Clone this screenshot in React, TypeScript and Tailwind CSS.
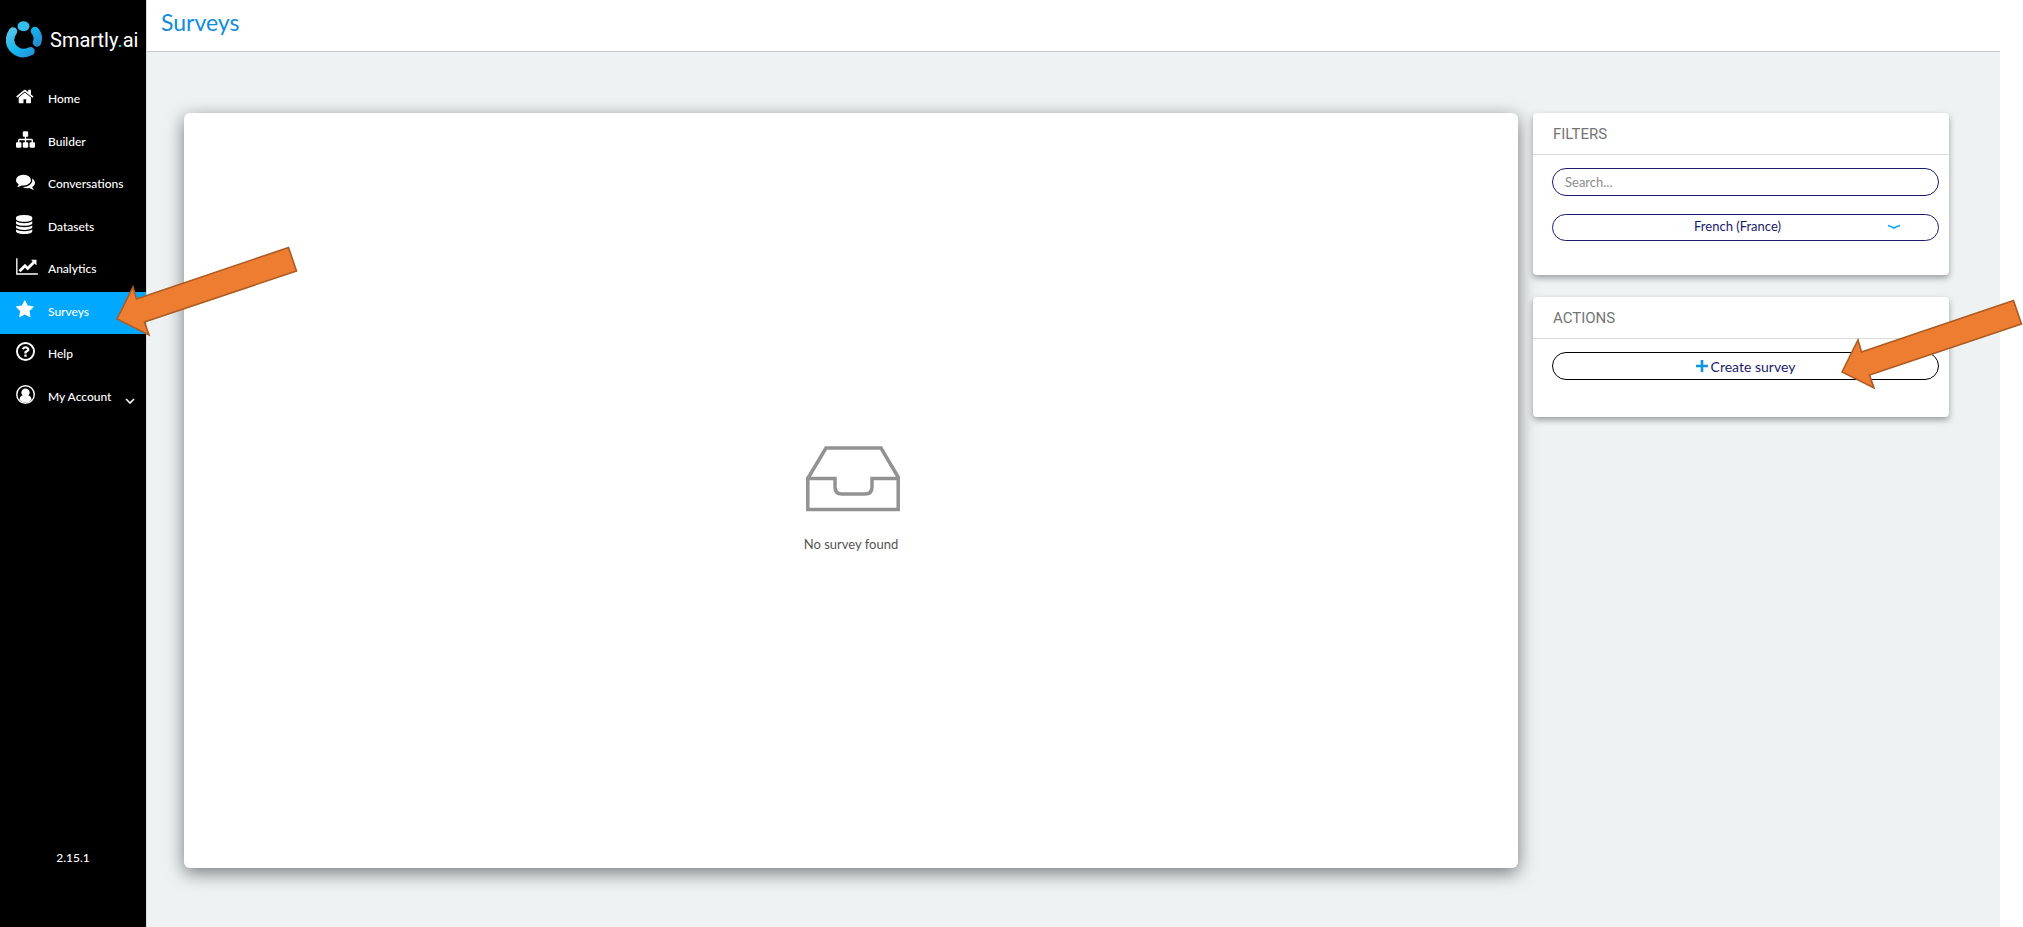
import { useState } from "react";
import type { ReactNode } from "react";

interface NavItem {
  label: string;
  icon: ReactNode;
}

function Glyph({ d, wide = false }: { d: string; wide?: boolean }) {
  return (
    <svg
      viewBox={wide ? "0 0 2048 1792" : "0 0 1792 1792"}
      className={wide ? "h-[19px] w-[22px]" : "h-[19px] w-[19px]"}
      fill="currentColor"
      aria-hidden="true"
    >
      <path d={d} />
    </svg>
  );
}

const HOME =
  "M1408 992v480q0 26-19 45t-45 19h-384v-384h-256v384h-384q-26 0-45-19t-19-45v-480q0-1 .5-3t.5-3l575-474 575 474q1 2 1 6zm223-69l-62 74q-8 9-21 11h-3q-13 0-21-7l-692-577-692 577q-12 8-24 7-13-2-21-11l-62-74q-8-10-7-23.5t11-21.5l719-599q32-26 76-26t76 26l244 204v-195q0-14 9-23t23-9h192q14 0 23 9t9 23v408l219 182q10 8 11 21.5t-7 23.5z";
const SITEMAP =
  "M1792 1248v320q0 40-28 68t-68 28h-320q-40 0-68-28t-28-68v-320q0-40 28-68t68-28h96v-192h-512v192h96q40 0 68 28t28 68v320q0 40-28 68t-68 28h-320q-40 0-68-28t-28-68v-320q0-40 28-68t68-28h96v-192h-512v192h96q40 0 68 28t28 68v320q0 40-28 68t-68 28h-320q-40 0-68-28t-28-68v-320q0-40 28-68t68-28h96v-192q0-52 38-90t90-38h512v-192h-96q-40 0-68-28t-28-68v-320q0-40 28-68t68-28h320q40 0 68 28t28 68v320q0 40-28 68t-68 28h-96v192h512q52 0 90 38t38 90v192h96q40 0 68 28t28 68z";
const COMMENTS =
  "M1408 768q0 139-94 257t-256.5 186.5-353.5 68.5q-86 0-176-16-124 88-278 128-36 9-86 16h-3q-11 0-20.5-8t-11.5-21q-1-3-1-6.5t.5-6.5 2-6l2.5-5 3.5-5.5 4-5 4.5-5 4-4.5q5-6 23-25t26-29.5 22.5-29 25-38.5 20.5-44q-124-72-195-177t-71-224q0-139 94-257t256.5-186.5 353.5-68.5 353.5 68.5 256.5 186.5 94 257zm384 256q0 120-71 224.5t-195 176.5q10 24 20.5 44t25 38.5 22.5 29 26 29.5 23 25q1 1 4 4.5t4.5 5 4 5 3.5 5.5l2.5 5 2 6 .5 6.5-1 6.5q-3 14-13 22t-22 7q-50-7-86-16-154-40-278-128-90 16-176 16-271 0-472-132 58 4 88 4 161 0 309-45t264-129q125-92 192-212t67-254q0-77-23-152 129 71 204 178t75 230z";
const DATABASE =
  "M768 768q237 0 443-43t325-127v170q0 69-103 128t-280 93.5-385 34.5-385-34.5-280-93.5-103-128v-170q119 84 325 127t443 43zm0 768q237 0 443-43t325-127v170q0 69-103 128t-280 93.5-385 34.5-385-34.5-280-93.5-103-128v-170q119 84 325 127t443 43zm0-384q237 0 443-43t325-127v170q0 69-103 128t-280 93.5-385 34.5-385-34.5-280-93.5-103-128v-170q119 84 325 127t443 43zm0-1152q208 0 385 34.5t280 93.5 103 128v128q0 69-103 128t-280 93.5-385 34.5-385-34.5-280-93.5-103-128v-128q0-69 103-128t280-93.5 385-34.5z";
const LINE_CHART =
  "M2048 1536v128h-2048v-1536h128v1408h1920zm-128-1248v435q0 21-19.5 29.5t-35.5-7.5l-121-121-633 633q-10 10-23 10t-23-10l-233-233-416 416-192-192 585-585q10-10 23-10t23 10l233 233 464-464-121-121q-16-16-7.5-35.5t29.5-19.5h435q14 0 23 9t9 23z";
const STAR =
  "M1664 647q0 22-26 48l-363 354 86 500q1 7 1 20 0 21-10.5 35.5t-30.5 14.5q-19 0-40-12l-449-236-449 236q-22 12-40 12-21 0-31.5-14.5t-10.5-35.5q0-6 2-20l86-500-364-354q-25-27-25-48 0-37 56-46l502-73 225-455q19-41 49-41t49 41l225 455 502 73q56 9 56 46z";
const QUESTION =
  "M1008 1200v160q0 14-9 23t-23 9h-160q-14 0-23-9t-9-23v-160q0-14 9-23t23-9h160q14 0 23 9t9 23zm256-496q0 50-15 90t-45.5 69-52 44-59.5 36q-32 18-46.5 28t-26 24-11.5 29v32q0 14-9 23t-23 9h-160q-14 0-23-9t-9-23v-68q0-35 10.5-64.5t24-47.5 39-35.5 41-25.5 44.5-21q53-25 75-43t22-49q0-42-43.5-71.5t-95.5-29.5q-56 0-95 27-29 20-80 83-9 12-25 12-11 0-19-6l-108-82q-10-7-12-20t5-23q122-192 349-192 129 0 238.5 89.5t109.5 214.5z";

function HelpIcon() {
  return (
    <svg viewBox="0 0 1792 1792" className="h-[19px] w-[19px]" fill="currentColor" aria-hidden="true">
      <circle cx="896" cy="896" r="805" fill="none" stroke="currentColor" strokeWidth="180" />
      <path d={QUESTION} />
    </svg>
  );
}

function AccountIcon() {
  return (
    <svg viewBox="0 0 20 20" className="h-[19px] w-[19px]" aria-hidden="true">
      <circle cx="10" cy="10" r="9.2" fill="none" stroke="currentColor" strokeWidth="1.5" />
      <circle cx="10" cy="8" r="4.4" fill="currentColor" />
      <path d="M3.6 15.4c.5-3 1.7-4.3 3.4-4.3h6c1.7 0 2.9 1.3 3.4 4.3A8.4 8.4 0 0 1 3.6 15.4z" fill="currentColor" />
    </svg>
  );
}

const navItems: NavItem[] = [
  { label: "Home", icon: <Glyph d={HOME} /> },
  { label: "Builder", icon: <Glyph d={SITEMAP} /> },
  { label: "Conversations", icon: <Glyph d={COMMENTS} /> },
  { label: "Datasets", icon: <Glyph d={DATABASE} /> },
  { label: "Analytics", icon: <Glyph d={LINE_CHART} wide /> },
  { label: "Surveys", icon: <Glyph d={STAR} /> },
  { label: "Help", icon: <HelpIcon /> },
  { label: "My Account", icon: <AccountIcon /> },
];

function Logo() {
  return (
    <a href="#home" className="flex items-center gap-2 pl-[6px]">
      <svg viewBox="0 0 36 37" className="h-[37px] w-[36px] shrink-0" aria-hidden="true">
        <defs>
          <linearGradient id="ring" gradientUnits="userSpaceOnUse" x1="3" y1="6" x2="28" y2="34">
            <stop offset="0" stopColor="#5cc8e8" />
            <stop offset="0.6" stopColor="#12b4ee" />
            <stop offset="1" stopColor="#2a8fd8" />
          </linearGradient>
          <linearGradient id="side" gradientUnits="userSpaceOnUse" x1="26" y1="6" x2="33" y2="26">
            <stop offset="0" stopColor="#10b4f0" />
            <stop offset="1" stopColor="#2a86cf" />
          </linearGradient>
        </defs>
        <path d="M7 10.500C2.800 16 3 24 8.500 28.500C13 32.500 19 33 24.500 30.300" fill="none" stroke="url(#ring)" strokeWidth="8.500" strokeLinecap="round" />
        <path d="M29 10C32 13.500 32.500 17.500 31 21.500" fill="none" stroke="url(#side)" strokeWidth="8.500" strokeLinecap="round" />
        <ellipse cx="17.500" cy="5.200" rx="6.400" ry="5.400" fill="#35bdec" stroke="#000" strokeWidth="0.800" />
      </svg>
      <span className="font-[Roboto,sans-serif] text-[20px] leading-6">
        Smartly<span className="text-[#3fd0e0]">.</span>ai
      </span>
    </a>
  );
}

// Orange callout arrow, tip at the lower left
function Arrow({ className }: { className: string }) {
  return (
    <svg viewBox="0 0 184 92" className={`pointer-events-none absolute z-20 h-[92px] w-[184px] ${className}`} aria-hidden="true">
      <path
        d="M3 74 L19 42 L22.500 54 L174.500 2.500 L182.500 26 L30.500 77 L35 90 Z"
        fill="#ed7d31"
        stroke="#ae5a21"
        strokeWidth="1.600"
      />
    </svg>
  );
}

function Sidebar({ active, setActive }: { active: string; setActive: (label: string) => void }) {
  return (
    <aside className="flex w-[146px] shrink-0 flex-col bg-black pt-[21px] pb-[59px] text-white">
      <Logo />
      <nav className="mt-[21px] grid h-[340px] auto-rows-fr">
        {navItems.map((item) => (
          <button
            key={item.label}
            type="button"
            onClick={() => setActive(item.label)}
            className={`relative flex items-center pl-4 text-left ${active === item.label ? "bg-[#00a8ff]" : ""}`}
          >
            <span className="flex w-8 shrink-0 pb-[7px]">{item.icon}</span>
            <span className="pb-[2px] text-[12px] leading-4 font-medium whitespace-nowrap">{item.label}</span>
            {item.label === "My Account" && (
              <svg viewBox="0 0 10 6" className="mt-[6px] ml-[14px] h-[6px] w-[10px]" aria-hidden="true">
                <path d="M1 1l4 4 4-4" fill="none" stroke="currentColor" strokeWidth="1.600" />
              </svg>
            )}
            {item.label === "Surveys" && <Arrow className="-top-[47px] left-[114px]" />}
          </button>
        ))}
      </nav>
      <p className="mt-auto text-center text-[12px] leading-5 font-medium">2.15.1</p>
    </aside>
  );
}

function Panel({ title, children }: { title: string; children: ReactNode }) {
  return (
    <section className="rounded bg-white shadow-[0_3px_6px_rgba(0,0,0,0.35)]">
      <h2 className="border-b border-[#dcdcdc] px-5 pt-[11px] pb-[10px] font-[Roboto,sans-serif] text-[15px] leading-5 text-[#757575]">
        {title}
      </h2>
      <div className="flex flex-col pt-[13px] pr-[10px] pb-[34px] pl-[19px]">{children}</div>
    </section>
  );
}

export default function App() {
  const [active, setActive] = useState("Surveys");
  const [search, setSearch] = useState("");
  const [language, setLanguage] = useState("French (France)");

  return (
    <div className="flex min-h-screen overflow-x-hidden bg-white pr-[23px] font-[Lato,sans-serif]">
      <Sidebar active={active} setActive={setActive} />
      <div className="flex min-w-0 flex-1 flex-col border-l border-[#d8dcdd] bg-[#eef2f3]">
        <header className="border-b border-[#c8c8c8] bg-white px-[14px] pt-[6px] pb-[13px]">
          <h1 className="text-[23px] leading-8 text-[#0f8ce0]">Surveys</h1>
        </header>
        <main className="flex flex-1 items-stretch gap-[15px] pt-[61px] pr-[51px] pb-[59px] pl-[37px]">
          <section className="flex min-w-0 flex-1 flex-col items-center justify-center gap-[22px] rounded-md bg-white pt-[18px] shadow-[0_5px_18px_rgba(0,0,0,0.5)]">
            <svg viewBox="0 0 94 66" className="ml-1 h-[66px] w-[94px]" fill="none" stroke="#929292" strokeWidth="3.500" aria-hidden="true">
              <path d="M1.800 32.500 L20 2 H75 L93 32.500 M1.800 32.500 V63.500 H92.200 V32.500 H66 V41 Q66 48 59 48 H36 Q29 48 29 41 V32.500 Z" />
            </svg>
            <p className="text-[13px] leading-5 text-[#555]">No survey found</p>
          </section>
          <div className="flex w-[416px] shrink-0 flex-col gap-[22px]">
            <Panel title="FILTERS">
              <input
                type="text"
                aria-label="Search"
                placeholder="Search..."
                value={search}
                onChange={(e) => setSearch(e.target.value)}
                className="h-7 rounded-full border border-[#1a1a75] px-3 text-[13px] text-[#1a1a6c] outline-none placeholder:text-[#8c8c8c]"
              />
              <div className="relative mt-[18px] flex">
                <select
                  aria-label="Language"
                  value={language}
                  onChange={(e) => setLanguage(e.target.value)}
                  className="h-[27px] w-full appearance-none rounded-full border border-[#1a1a75] bg-white pr-4 pb-[2px] text-center text-[13px] text-[#1a1a6c] outline-none [text-align-last:center]"
                >
                  <option>French (France)</option>
                </select>
                <svg viewBox="0 0 14 6" className="pointer-events-none absolute top-[10px] right-[38px] h-[6px] w-[14px]" aria-hidden="true">
                  <path d="M1 1.500Q4.500 2.500 7 4Q9.500 2.500 13 1.500" fill="none" stroke="#00a8ff" strokeWidth="1.800" />
                </svg>
              </div>
            </Panel>
            <Panel title="ACTIONS">
              <button
                type="button"
                className="relative mb-[3px] flex h-7 items-center justify-center gap-[3px] rounded-full border border-black text-[14px] text-[#1a1a6c]"
              >
                <svg viewBox="0 0 12 12" className="h-3 w-3" aria-hidden="true">
                  <path d="M6 0v12M0 6h12" stroke="#0d95e0" strokeWidth="2.600" />
                </svg>
                Create survey
                <Arrow className="-top-[55px] -right-[85px]" />
              </button>
            </Panel>
          </div>
        </main>
      </div>
    </div>
  );
}
